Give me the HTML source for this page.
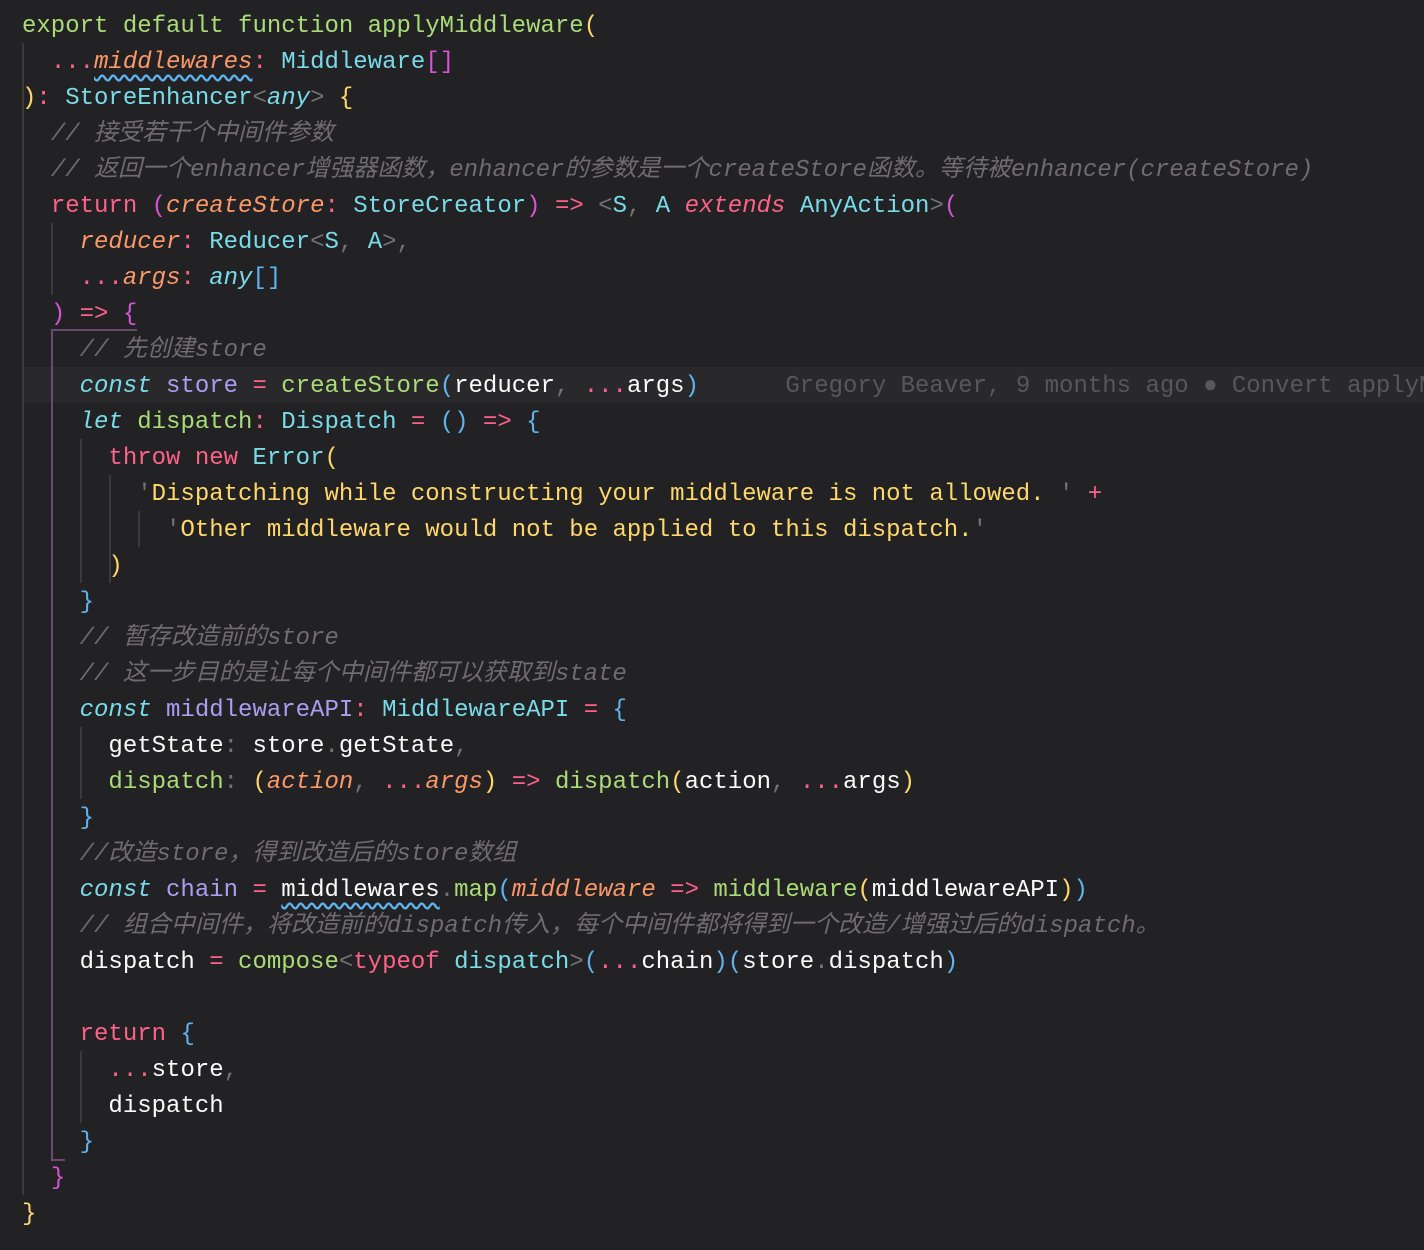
<!DOCTYPE html>
<html><head><meta charset="utf-8"><style>
html,body{margin:0;padding:0;background:#222124;width:1424px;height:1250px;overflow:hidden}
pre{position:absolute;left:22px;top:9px;width:1402px;overflow:hidden;margin:0;font:24px/36px "Liberation Mono","Noto Sans CJK SC",monospace;color:#fcfcfa;white-space:pre;z-index:2}
.g{color:#a9dc76}.p{color:#ff6188}.o{color:#fc9867}.c{color:#78dce8}.y{color:#ffd866}.v{color:#ab9df2}.m{color:#747275}
.i{font-style:italic}.cm{color:#6e6c6f;font-style:italic}.b{color:#58575a}.pu{color:#d454d4}.bl{color:#5fb4f0}
.sq{text-decoration:underline wavy #5fb4f0;text-underline-offset:6px}
.hl{position:absolute;left:22px;right:0;top:367px;height:36px;background:#29282b;z-index:1}
.gd{position:absolute;width:2px;background:#3a393c;z-index:1}
</style></head><body>
<div class="hl"></div>
<div class="gd" style="left:22px;top:43px;height:72px"></div>
<div class="gd" style="left:22px;top:115px;height:1080px"></div>
<div class="gd" style="left:51px;top:223px;height:72px"></div>
<div class="gd" style="left:51px;top:331px;height:828px;background:#6b4a72"></div>
<div style="position:absolute;left:51px;top:329px;width:86px;height:2px;background:#6b4a72;z-index:1"></div>
<div style="position:absolute;left:51px;top:1159px;width:14px;height:2px;background:#6b4a72;z-index:1"></div>
<div class="gd" style="left:80px;top:439px;height:144px"></div>
<div class="gd" style="left:109px;top:475px;height:108px"></div>
<div class="gd" style="left:138px;top:511px;height:36px"></div>
<div class="gd" style="left:80px;top:727px;height:72px"></div>
<div class="gd" style="left:80px;top:1051px;height:72px"></div>
<pre><span class="g">export default function applyMiddleware</span><span class="y">(</span>
  <span class="p">...</span><span class="o i sq">middlewares</span><span class="p">:</span> <span class="c">Middleware</span><span class="pu">[]</span>
<span class="y">)</span><span class="p">:</span> <span class="c">StoreEnhancer</span><span class="m">&lt;</span><span class="c i">any</span><span class="m">&gt;</span> <span class="y">{</span>
  <span class="cm">// 接受若干个中间件参数</span>
  <span class="cm">// 返回一个enhancer增强器函数，enhancer的参数是一个createStore函数。等待被enhancer(createStore)</span>
  <span class="p">return</span> <span class="pu">(</span><span class="o i">createStore</span><span class="p">:</span> <span class="c">StoreCreator</span><span class="pu">)</span> <span class="p">=&gt;</span> <span class="m">&lt;</span><span class="c">S</span><span class="m">,</span> <span class="c">A</span> <span class="p i">extends</span> <span class="c">AnyAction</span><span class="m">&gt;</span><span class="pu">(</span>
    <span class="o i">reducer</span><span class="p">:</span> <span class="c">Reducer</span><span class="m">&lt;</span><span class="c">S</span><span class="m">,</span> <span class="c">A</span><span class="m">&gt;,</span>
    <span class="p">...</span><span class="o i">args</span><span class="p">:</span> <span class="c i">any</span><span class="bl">[]</span>
  <span class="pu">)</span> <span class="p">=&gt;</span> <span class="pu">{</span>
    <span class="cm">// 先创建store</span>
    <span class="c i">const</span> <span class="v">store</span> <span class="p">=</span> <span class="g">createStore</span><span class="bl">(</span>reducer<span class="m">,</span> <span class="p">...</span>args<span class="bl">)</span>      <span class="b">Gregory Beaver, 9 months ago ● Convert applyM</span>
    <span class="c i">let</span> <span class="g">dispatch</span><span class="p">:</span> <span class="c">Dispatch</span> <span class="p">=</span> <span class="bl">()</span> <span class="p">=&gt;</span> <span class="bl">{</span>
      <span class="p">throw new</span> <span class="c">Error</span><span class="y">(</span>
        <span class="m">'</span><span class="y">Dispatching while constructing your middleware is not allowed. </span><span class="m">'</span> <span class="p">+</span>
          <span class="m">'</span><span class="y">Other middleware would not be applied to this dispatch.</span><span class="m">'</span>
      <span class="y">)</span>
    <span class="bl">}</span>
    <span class="cm">// 暂存改造前的store</span>
    <span class="cm">// 这一步目的是让每个中间件都可以获取到state</span>
    <span class="c i">const</span> <span class="v">middlewareAPI</span><span class="p">:</span> <span class="c">MiddlewareAPI</span> <span class="p">=</span> <span class="bl">{</span>
      getState<span class="m">:</span> store<span class="m">.</span>getState<span class="m">,</span>
      <span class="g">dispatch</span><span class="m">:</span> <span class="y">(</span><span class="o i">action</span><span class="m">,</span> <span class="p">...</span><span class="o i">args</span><span class="y">)</span> <span class="p">=&gt;</span> <span class="g">dispatch</span><span class="y">(</span>action<span class="m">,</span> <span class="p">...</span>args<span class="y">)</span>
    <span class="bl">}</span>
    <span class="cm">//改造store，得到改造后的store数组</span>
    <span class="c i">const</span> <span class="v">chain</span> <span class="p">=</span> <span class="sq">middlewares</span><span class="m">.</span><span class="g">map</span><span class="bl">(</span><span class="o i">middleware</span> <span class="p">=&gt;</span> <span class="g">middleware</span><span class="y">(</span>middlewareAPI<span class="y">)</span><span class="bl">)</span>
    <span class="cm">// 组合中间件，将改造前的dispatch传入，每个中间件都将得到一个改造/增强过后的dispatch。</span>
    dispatch <span class="p">=</span> <span class="g">compose</span><span class="m">&lt;</span><span class="p">typeof</span> <span class="c">dispatch</span><span class="m">&gt;</span><span class="bl">(</span><span class="p">...</span>chain<span class="bl">)(</span>store<span class="m">.</span>dispatch<span class="bl">)</span>

    <span class="p">return</span> <span class="bl">{</span>
      <span class="p">...</span>store<span class="m">,</span>
      dispatch
    <span class="bl">}</span>
  <span class="pu">}</span>
<span class="y">}</span></pre>
</body></html>
